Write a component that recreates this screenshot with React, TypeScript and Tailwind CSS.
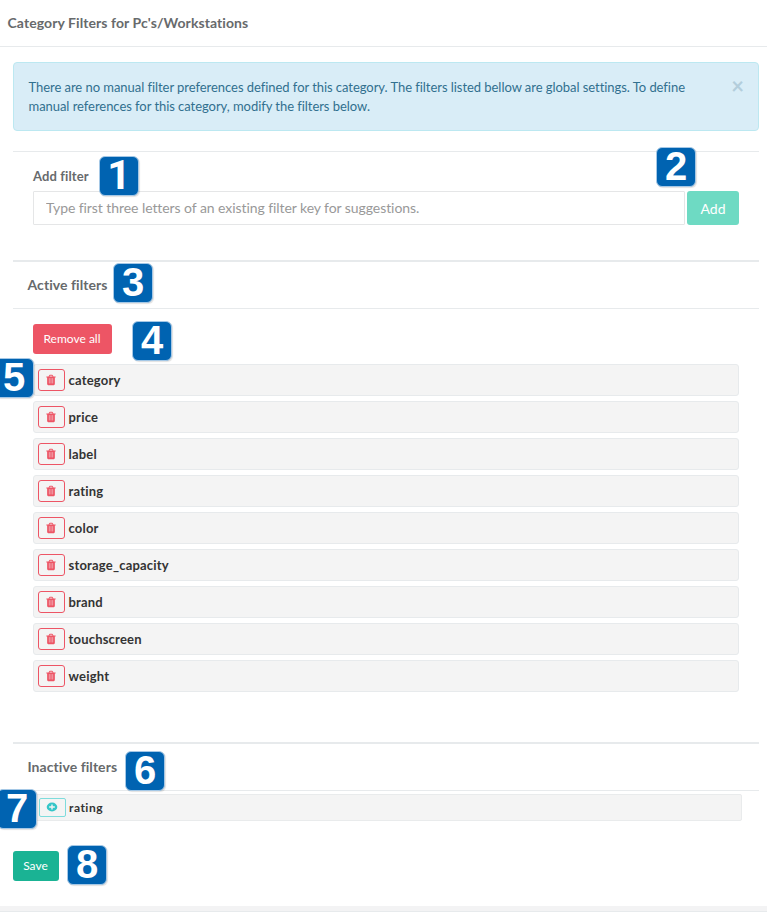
const activeFilters = [
  "category",
  "price",
  "label",
  "rating",
  "color",
  "storage_capacity",
  "brand",
  "touchscreen",
  "weight",
];

function Marker({ n, place }: { n: number; place: string }) {
  const face =
    n === 1
      ? "font-['Roboto',sans-serif] text-[41px]"
      : "font-['Liberation_Sans',Arial,sans-serif] text-[40px]";
  return (
    <span
      className={`absolute z-10 flex h-[40px] w-[40px] items-center justify-center rounded-[6px] border border-[#a5c8e6] bg-[#0063b1] leading-none font-bold text-white shadow-[1px_1px_1px_rgba(0,0,0,0.12)] ${face} ${place}`}
    >
      <span className="relative -top-px">{n}</span>
    </span>
  );
}

function TrashIcon() {
  return (
    <svg viewBox="0 0 1792 1792" className="mr-[2px] mb-px h-[12px] w-[12px]" fill="currentColor">
      <path d="M420 640h900v900h-900z" opacity="0.45" />
      <path d="M704 1376v-704q0-14-9-23t-23-9h-64q-14 0-23 9t-9 23v704q0 14 9 23t23 9h64q14 0 23-9t9-23zm256 0v-704q0-14-9-23t-23-9h-64q-14 0-23 9t-9 23v704q0 14 9 23t23 9h64q14 0 23-9t9-23zm256 0v-704q0-14-9-23t-23-9h-64q-14 0-23 9t-9 23v704q0 14 9 23t23 9h64q14 0 23-9t9-23zm-544-992h448l-48-117q-7-9-17-11h-317q-10 2-17 11zm928 32v64q0 14-9 23t-23 9h-96v948q0 83-47 143.5t-113 60.5h-832q-66 0-113-58.5t-47-141.5v-952h-96q-14 0-23-9t-9-23v-64q0-14 9-23t23-9h309l70-167q15-37 54-63t79-26h320q40 0 79 26t54 63l70 167h309q14 0 23 9t9 23z" />
    </svg>
  );
}

function PlusIcon() {
  return (
    <svg viewBox="0 0 12 10" className="mr-px mb-px h-[10px] w-[12px]" fill="none">
      <ellipse cx="6" cy="5" rx="5.3" ry="4.4" fill="#35c6c8" />
      <path d="M6 2.6v4.8M3.2 5h5.6" stroke="#f4f4f4" strokeWidth="1.4" />
    </svg>
  );
}

export default function App() {
  return (
    <div className="relative flex h-[914px] w-[767px] flex-col overflow-hidden bg-white font-['Lato',sans-serif] text-[14px] text-[#676a6c]">
      <header className="flex h-[47px] shrink-0 items-center border-b border-[#e7eaec] pb-[2px] pl-[7.5px]">
        <h1 className="font-bold tracking-[0.08px]">Category Filters for Pc's/Workstations</h1>
      </header>

      <main className="flex flex-col pt-[15px] pr-[8px] pl-[13px]">
        <div className="flex h-[69px] justify-between rounded-[4px] border border-[#bce8f1] bg-[#d9edf7] pt-[15px] pr-[14px] pl-[14.5px] text-[13px] leading-[19px] text-[#31708f]">
          <p className="w-[670px] tracking-[-0.05px]">
            There are no manual filter preferences defined for this category. The filters listed bellow are global settings. To define
            manual references for this category, modify the filters below.
          </p>
          <button className="-mt-[2px] h-[20px] text-[22px] leading-[20px] font-bold text-[#b3cedc]">×</button>
        </div>

        <section className="mt-[20px] h-[109px] border-t border-[#e7eaec] px-[20px] pt-[15px]">
          <label className="block h-[24px] text-[13px] leading-[19px] font-bold tracking-[0.12px]">Add filter</label>
          <div className="flex gap-[2px]">
            <input
              className="h-[34px] w-[652px] rounded-[1px] border border-[#e5e6e7] px-[12px] pb-[2px] text-[14px] tracking-[-0.07px] placeholder:text-[#999999]"
              placeholder="Type first three letters of an existing filter key for suggestions."
            />
            <button className="h-[34px] w-[52px] rounded-[3px] bg-[#6edac3] pt-px text-white">Add</button>
          </div>
        </section>

        <section className="h-[482px] border-t-2 border-[#e7eaec]">
          <h2 className="flex h-[47px] items-center border-b border-[#e7eaec] pb-[2px] pl-[14.5px] font-bold tracking-[0.06px]">Active filters</h2>
          <div className="px-[20px] pt-[15px]">
            <button className="h-[30px] w-[79px] rounded-[3px] bg-[#ed5565] pr-px text-[12px] text-white">Remove all</button>
            <ul className="mt-[10px] flex flex-col gap-[5px]">
              {activeFilters.map((name) => (
                <li
                  key={name}
                  className="flex h-[32px] items-center gap-[4px] rounded-[3px] border border-[#e7eaec] bg-[#f4f4f4] pl-[4px] text-[13px] font-bold tracking-[0.2px] text-[#333333]"
                >
                  <button className="flex h-[22px] w-[27px] items-center justify-center rounded-[3px] border border-[#ed5565] text-[#ed5565]">
                    <TrashIcon />
                  </button>
                  <span className="-ml-[0.5px] pt-[2px]">{name}</span>
                </li>
              ))}
            </ul>
          </div>
        </section>

        <section className="border-t-2 border-[#e7eaec]">
          <h2 className="flex h-[47px] items-center border-b border-[#e7eaec] pb-[2px] pl-[14.5px] font-bold tracking-[0.06px]">Inactive filters</h2>
          <div className="mt-[3px] mr-[17px] ml-[22px] flex h-[27px] items-center gap-[3px] rounded-[2px] border border-[#e9ebec] bg-[#f4f4f4] pl-[3px] text-[12px] font-bold tracking-[0.5px] text-[#333333]">
            <button className="flex h-[19px] w-[27px] items-center justify-center rounded-[2px] border border-[#7edcdc]">
              <PlusIcon />
            </button>
            rating
          </div>
        </section>

        <button className="mt-[30px] h-[30px] w-[46px] rounded-[3px] bg-[#1ab394] pr-px text-[12px] text-white">Save</button>
      </main>

      <footer className="mt-[25px] h-[6px] shrink-0 border-b border-[#e7eaec] bg-[#f3f3f4]" />

      <Marker n={1} place="left-[99px] top-[156px]" />
      <Marker n={2} place="left-[656px] top-[147px]" />
      <Marker n={3} place="left-[113px] top-[263px]" />
      <Marker n={4} place="left-[132px] top-[321px]" />
      <Marker n={5} place="left-[-6px] top-[358px]" />
      <Marker n={6} place="left-[125px] top-[751px]" />
      <Marker n={7} place="left-[-3px] top-[789px]" />
      <Marker n={8} place="left-[67px] top-[845px]" />
    </div>
  );
}
